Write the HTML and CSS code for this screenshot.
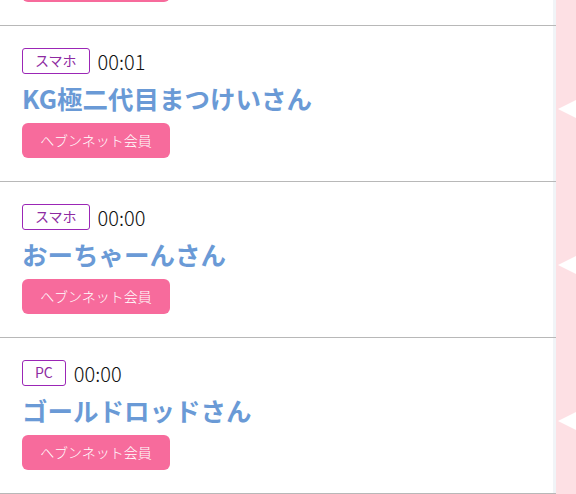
FILE: index.html
```html
<!DOCTYPE html>
<html lang="ja">
<head>
    <meta charset="UTF-8">
    <meta name="viewport" content="width=device-width, initial-scale=1.0">
    <title>アクセス履歴</title>
    <link rel="stylesheet" href="styles.css">
</head>
<body>

    <main class="history">
        <!-- 上にスクロールされた一件 -->
        <div class="row">
            <div class="entry">
                <div class="meta">
                    <span class="tag">スマホ</span>
                    <span class="time">00:02</span>
                </div>
                <div class="name">ゆうきさん</div>
                <span class="badge">ヘブンネット会員</span>
            </div>
            <div class="side"><span class="arrow"></span></div>
        </div>

        <div class="row">
            <div class="entry">
                <div class="meta">
                    <span class="tag">スマホ</span>
                    <span class="time">00:01</span>
                </div>
                <div class="name">KG極二代目まつけいさん</div>
                <span class="badge">ヘブンネット会員</span>
            </div>
            <div class="side"><span class="arrow"></span></div>
        </div>

        <div class="row">
            <div class="entry">
                <div class="meta">
                    <span class="tag">スマホ</span>
                    <span class="time">00:00</span>
                </div>
                <div class="name">おーちゃーんさん</div>
                <span class="badge">ヘブンネット会員</span>
            </div>
            <div class="side"><span class="arrow"></span></div>
        </div>

        <div class="row">
            <div class="entry">
                <div class="meta">
                    <span class="tag">PC</span>
                    <span class="time">00:00</span>
                </div>
                <div class="name">ゴールドロッドさん</div>
                <span class="badge">ヘブンネット会員</span>
            </div>
            <div class="side"><span class="arrow"></span></div>
        </div>
    </main>

</body>
</html>
```

FILE: styles.css
```css
body {
    font-family: "Noto Sans CJK JP", "Noto Sans", sans-serif;
    margin: 0;
    padding: 0;
    background-color: #ffffff;
    overflow: hidden;
}
.history {
    margin-top: -130px;
}
.row {
    display: flex;
}
.entry {
    flex: 1;
    display: flex;
    flex-direction: column;
    align-items: flex-start;
    padding: 22px 0 23px 22px;
    background-color: #ffffff;
    border-bottom: 1px solid #b8b8b8;
    box-shadow: inset -3px 0 0 #f1f4f7;
}
.meta {
    display: flex;
    align-items: center;
    gap: 8px;
    height: 26px;
}
.tag {
    box-sizing: border-box;
    height: 26px;
    padding: 0 12px;
    border: 1.5px solid #9b26b6;
    border-radius: 3px;
    color: #8e2aa2;
    font-size: 14px;
    line-height: 23px;
}
.time {
    color: #111111;
    font-size: 20px;
    font-weight: 300;
}
.name {
    margin-top: 8px;
    color: #6a9ad6;
    font-size: 25.5px;
    font-weight: bold;
    line-height: 32px;
    white-space: nowrap;
}
.badge {
    margin-top: 9px;
    box-sizing: border-box;
    width: 148px;
    height: 35px;
    border-radius: 6px;
    background-color: #f76b9c;
    color: #ffffff;
    font-size: 14px;
    font-weight: 300;
    line-height: 35px;
    text-align: center;
}
.side {
    width: 20px;
    background-color: #fde0e4;
    display: flex;
    align-items: center;
    justify-content: flex-end;
}
.arrow {
    width: 0;
    height: 0;
    margin-top: 10px;
    border-top: 9px solid transparent;
    border-bottom: 9px solid transparent;
    border-right: 18px solid #ffffff;
}
```
